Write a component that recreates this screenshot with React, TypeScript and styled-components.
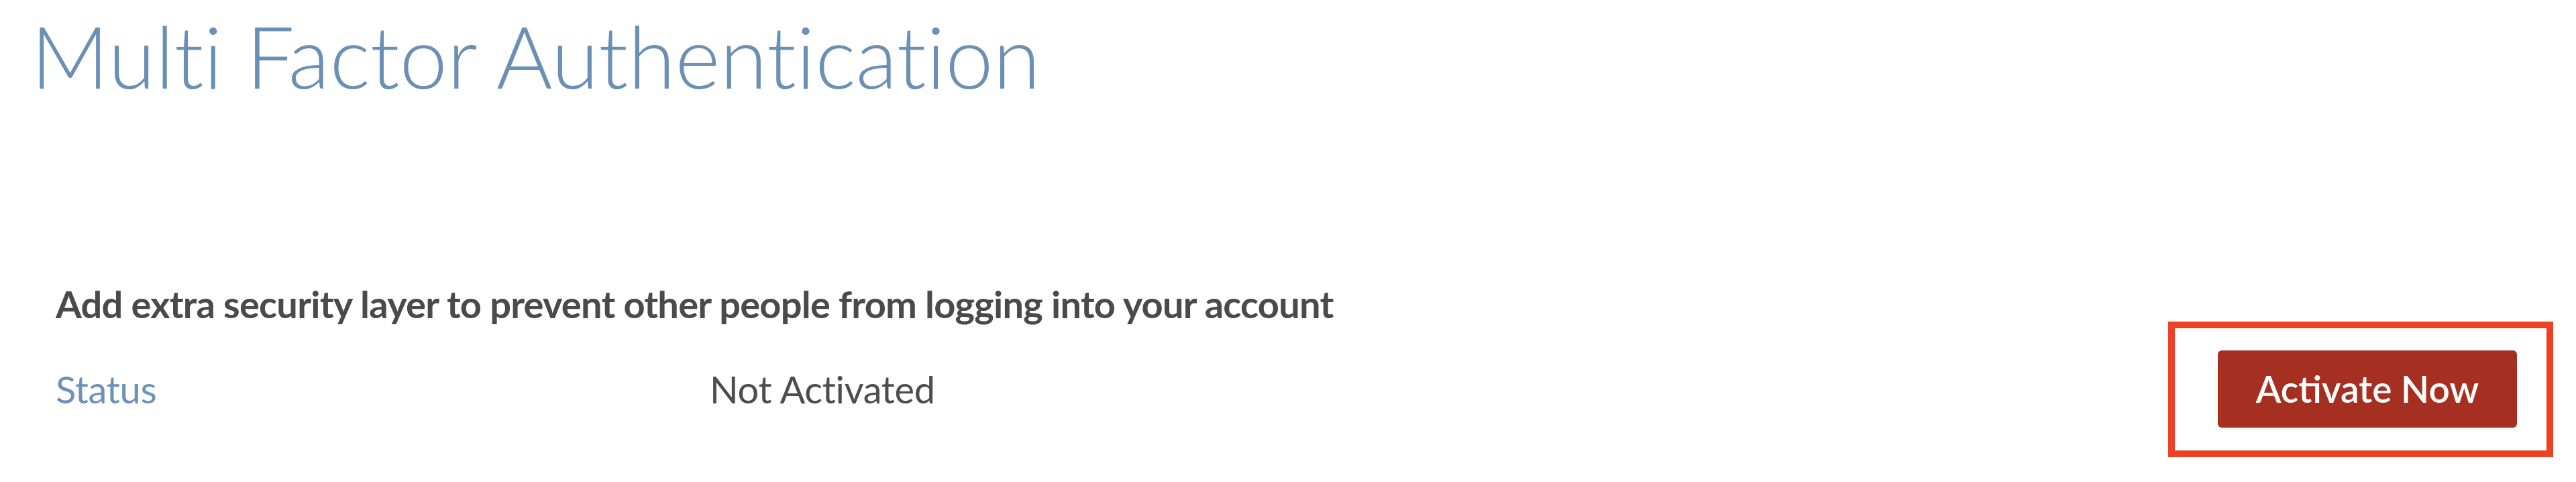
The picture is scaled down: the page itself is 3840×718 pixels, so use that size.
import React from "react";
import styled, { createGlobalStyle } from "styled-components";

const Global = createGlobalStyle`
  html, body { margin: 0; padding: 0; background: #ffffff; }
  body { font-family: Lato, "Open Sans", sans-serif; font-variant-ligatures: none; }
`;

const Page = styled.div`
  width: 3840px;
  height: 718px;
  box-sizing: border-box;
  display: flex;
  flex-direction: column;
  padding-top: 6px;
  background: #ffffff;
`;

const Title = styled.h1`
  margin: 0 0 0 46px;
  font-family: Lato, sans-serif;
  font-weight: 300;
  font-size: 128px;
  line-height: 1.2;
  font-variant-ligatures: none;
  font-feature-settings: "liga" 0, "clig" 0;
  color: #6b90b6;
`;

const Section = styled.section`
  display: flex;
  flex-direction: column;
  margin-top: 259px;
  padding: 0 88px 0 83px;
  gap: 36px;
`;

const Lead = styled.p`
  margin: 0;
  font-family: Lato, sans-serif;
  font-weight: 700;
  font-size: 56px;
  letter-spacing: -0.75px;
  line-height: 1.2;
  color: #4a4a4a;
`;

const Row = styled.div`
  display: flex;
  align-items: center;
`;

const Label = styled.span`
  width: 975px;
  font-family: Lato, sans-serif;
  font-size: 56px;
  letter-spacing: -0.3px;
  line-height: 1.2;
  color: #6d92b9;
`;

const Value = styled.span`
  flex: 1;
  font-family: Lato, sans-serif;
  font-size: 56px;
  letter-spacing: -0.3px;
  line-height: 1.2;
  color: #4d4d4d;
`;

const ButtonWrap = styled.div`
  position: relative;
  display: flex;
`;

const Highlight = styled.div`
  position: absolute;
  top: -43px;
  left: -74px;
  right: -54px;
  bottom: -44px;
  border: 10px solid #ec4124;
  pointer-events: none;
`;

const ActivateButton = styled.button`
  width: 446px;
  height: 115px;
  border: none;
  border-radius: 6px;
  background: #a52f20;
  color: #ffffff;
  font-family: Lato, sans-serif;
  font-weight: 600;
  font-size: 55px;
  cursor: pointer;
  display: flex;
  align-items: center;
  justify-content: center;
  padding: 0;
`;

export default function App() {
  return (
    <>
      <Global />
      <Page>
        <Title>Multi Factor Authentication</Title>
        <Section>
          <Lead>Add extra security layer to prevent other people from logging into your account</Lead>
          <Row>
            <Label>Status</Label>
            <Value>Not Activated</Value>
            <ButtonWrap>
              <Highlight />
              <ActivateButton>Activate Now</ActivateButton>
            </ButtonWrap>
          </Row>
        </Section>
      </Page>
    </>
  );
}
